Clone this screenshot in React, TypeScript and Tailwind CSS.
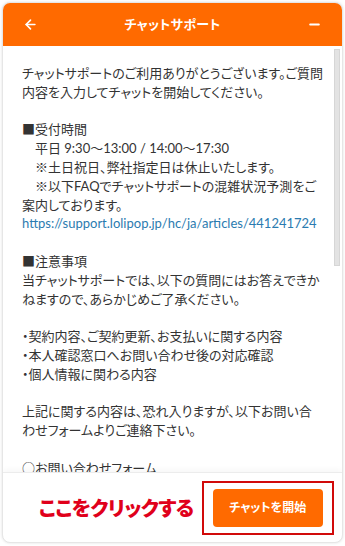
import { ArrowLeft, Minus } from 'lucide-react';

const lines: { t: string; link?: boolean }[] = [
  { t: 'チャットサポートのご利用ありがとうございます。ご質問' },
  { t: '内容を入力してチャットを開始してください。' },
  { t: '' },
  { t: '■受付時間' },
  { t: '　平日 9:30〜13:00 / 14:00〜17:30' },
  { t: '　※土日祝日、弊社指定日は休止いたします。' },
  { t: '　※以下FAQでチャットサポートの混雑状況予測をご' },
  { t: '案内しております。' },
  { t: 'https://support.lolipop.jp/hc/ja/articles/441241724', link: true },
  { t: '' },
  { t: '■注意事項' },
  { t: '当チャットサポートでは、以下の質問にはお答えできか' },
  { t: 'ねますので、あらかじめご了承ください。' },
  { t: '' },
  { t: '・契約内容、ご契約更新、お支払いに関する内容' },
  { t: '・本人確認窓口へお問い合わせ後の対応確認' },
  { t: '・個人情報に関わる内容' },
  { t: '' },
  { t: '上記に関する内容は、恐れ入りますが、以下お問い合' },
  { t: 'わせフォームよりご連絡下さい。' },
  { t: '' },
];

export default function App() {
  return (
    <div className="w-[345px] h-[546px] bg-white p-[2px] font-['Lato','Noto_Sans_CJK_JP',sans-serif] [font-feature-settings:'palt']">
      <div className="h-[541px] rounded-lg border border-[#e6e6e6] shadow-[0_0_3px_rgba(0,0,0,0.12)] flex flex-col overflow-hidden bg-white">
        {/* header */}
        <div className="h-[43px] shrink-0 bg-[#ff6a00] flex items-center justify-between px-[20px] text-white">
          <ArrowLeft size={15} strokeWidth={2.6} />
          <span className="text-[13px] font-bold tracking-wide">チャットサポート</span>
          <Minus size={15} strokeWidth={3} />
        </div>

        {/* body */}
        <div className="flex-1 flex min-h-0">
          <div className="flex-1 overflow-hidden pl-[19px] pt-[18px] text-[13px] leading-[18.8px] text-[#333]">
            {lines.map((l, i) => (
              <div
                key={i}
                className={`whitespace-pre h-[18.8px] ${l.link ? 'text-[#2b7bb0]' : ''}`}
              >
                {l.t}
              </div>
            ))}
            <div className="whitespace-pre h-[18.8px] font-['Noto_Sans_CJK_JP',sans-serif]">
              ○お問い合わせフォーム
            </div>
          </div>
          <div className="w-[8px] shrink-0 pt-[3px] pr-[2px]">
            <div className="h-[217px] w-[6px] bg-[#e3e3e3] border border-[#d6d6d6]" />
          </div>
        </div>

        {/* footer */}
        <div className="h-[70px] shrink-0 border-t border-[#ececec] shadow-[0_-2px_6px_rgba(0,0,0,0.04)] flex items-center pl-[36px] pr-[8px] gap-[8px]">
          <span className="text-[20px] font-black text-[#e0001b] tracking-tight whitespace-nowrap">
            ここをクリックする
          </span>
          <div className="border-2 border-[#d10a0a] px-[9px] py-[6px]">
            <button className="w-[110px] h-[38px] rounded bg-[#ff6a00] text-white text-[12px] font-bold">
              チャットを開始
            </button>
          </div>
        </div>
      </div>
    </div>
  );
}
